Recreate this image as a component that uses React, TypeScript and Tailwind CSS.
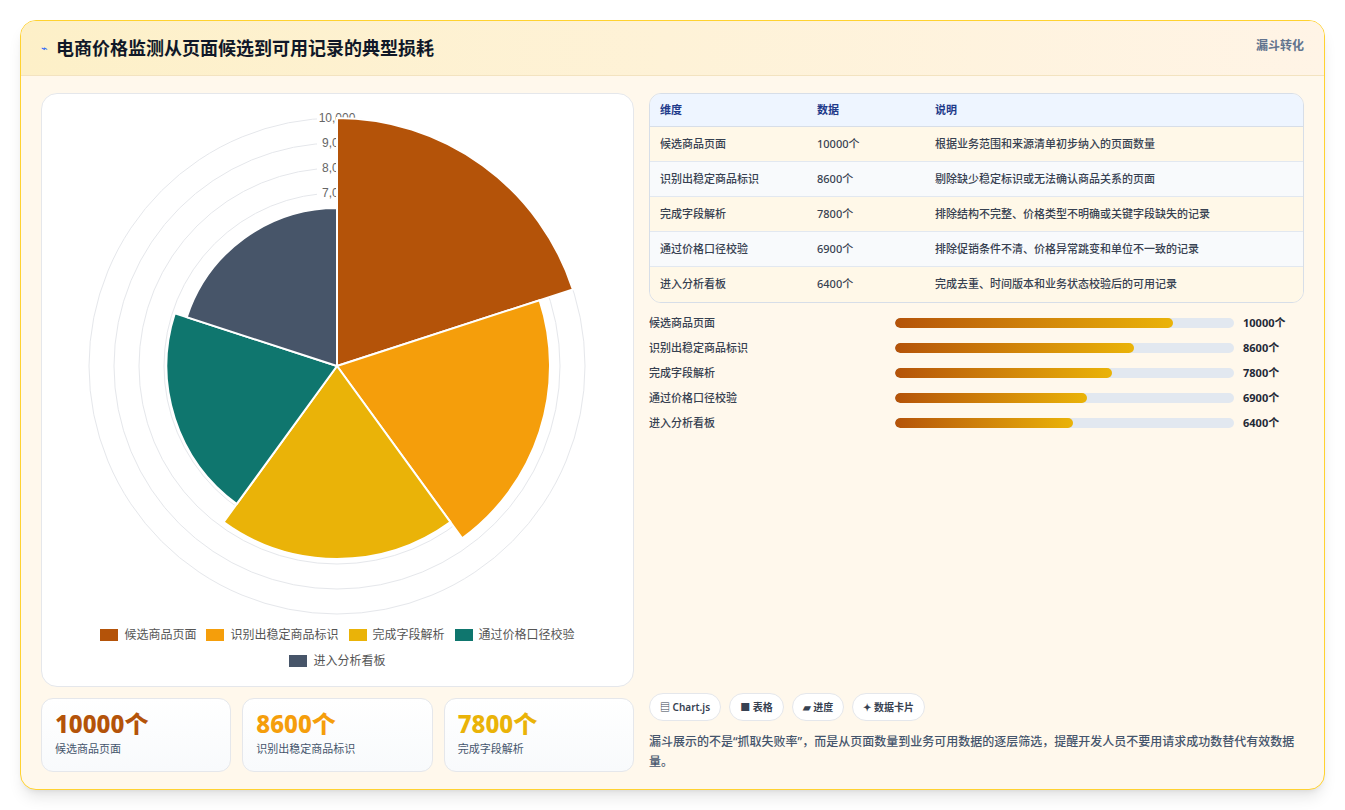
import React from "react";

const data = [
  { name: "候选商品页面", v: 10000, c: "#b45309", desc: "根据业务范围和来源清单初步纳入的页面数量" },
  { name: "识别出稳定商品标识", v: 8600, c: "#f59e0b", desc: "剔除缺少稳定标识或无法确认商品关系的页面" },
  { name: "完成字段解析", v: 7800, c: "#eab308", desc: "排除结构不完整、价格类型不明确或关键字段缺失的记录" },
  { name: "通过价格口径校验", v: 6900, c: "#0f766e", desc: "排除促销条件不清、价格异常跳变和单位不一致的记录" },
  { name: "进入分析看板", v: 6400, c: "#475569", desc: "完成去重、时间版本和业务状态校验后的可用记录" },
];

const font = { fontFamily: '"Noto Sans", "Noto Sans CJK SC", sans-serif' };

function Polar() {
  const cx = 296, cy = 268;
  const r = (v: number) => 0.025 * v - 2;
  const pt = (rad: number, deg: number) => {
    const a = ((deg - 90) * Math.PI) / 180;
    return [cx + rad * Math.cos(a), cy + rad * Math.sin(a)];
  };
  return (
    <svg width="593" height="520" viewBox="0 0 593 520">
      {[10000, 9000, 8000, 7000, 6000, 5000, 4000].map((v) => (
        <circle key={v} cx={cx} cy={cy} r={r(v)} fill="none" stroke="#e5e7eb" strokeWidth="1" />
      ))}
      {[10000, 9000, 8000, 7000].map((v) => (
        <g key={v}>
          <rect x={cx - 20} y={cy - r(v) - 7} width="40" height="13" fill="white" />
          <text x={cx} y={cy - r(v) + 4} textAnchor="middle" fontSize="12" fill="#666" fontFamily="Liberation Sans, sans-serif">
            {v.toLocaleString("en-US")}
          </text>
        </g>
      ))}
      {data.map((d, i) => {
        const rad = r(d.v);
        const [x1, y1] = pt(rad, i * 72);
        const [x2, y2] = pt(rad, (i + 1) * 72);
        return (
          <path key={i} d={`M${cx},${cy} L${x1},${y1} A${rad},${rad} 0 0 1 ${x2},${y2} Z`} fill={d.c} stroke="white" strokeWidth="2" />
        );
      })}
    </svg>
  );
}

export default function App() {
  return (
    <div className="w-[1345px] h-[810px] bg-white pt-5 px-5" style={font}>
      <div className="h-[770px] rounded-2xl border border-amber-300 bg-[#fff8ec] overflow-hidden shadow-lg flex flex-col">
        <div className="h-[55px] shrink-0 flex items-start justify-between px-5 bg-gradient-to-r from-[#fdf0c8] to-[#fff4e6] border-b border-[#f3e3c0]">
          <div className="flex items-center gap-2 h-[55px]">
            <span className="text-[11px] text-blue-600">⌁</span>
            <h1 className="text-[18px] font-bold text-gray-900">电商价格监测从页面候选到可用记录的典型损耗</h1>
          </div>
          <span className="mt-[16px] text-[12px] font-semibold text-slate-500">漏斗转化</span>
        </div>
        <div className="flex-1 flex gap-[15px] px-5 pt-[17px] pb-[18px]">
          <div className="w-[593px] flex flex-col gap-[11px]">
            <div className="h-[594px] rounded-2xl border border-[#e5e7eb] bg-white flex flex-col items-center pt-[4px]">
              <Polar />
              <div className="w-[500px] flex flex-wrap justify-center gap-x-[10px] gap-y-[8px] mt-[8px] text-[12px] text-[#555]">
                {data.map((d) => (
                  <div key={d.name} className="flex items-center gap-[6px]">
                    <span className="w-[18px] h-[12px]" style={{ background: d.c }} />
                    {d.name}
                  </div>
                ))}
              </div>
            </div>
            <div className="grid grid-cols-3 gap-[11px]">
              {data.slice(0, 3).map((d) => (
                <div key={d.name} className="h-[74px] rounded-xl border border-[#e5e7eb] bg-gradient-to-b from-white to-[#f8fafc] px-[13px] pt-[10px]">
                  <div className="text-[24px] font-extrabold leading-[30px]" style={{ color: d.c }}>{d.v}个</div>
                  <div className="text-[11px] text-slate-600 mt-[2px]">{d.name}</div>
                </div>
              ))}
            </div>
          </div>
          <div className="flex-1 flex flex-col">
            <div className="rounded-xl border border-[#d7dee8] overflow-hidden text-[11px]">
              <div className="grid grid-cols-[157px_118px_1fr] h-[33px] items-center px-[10px] bg-[#eef5ff] text-[#1e3a8a] font-semibold border-b border-[#d7dee8]">
                <span>维度</span><span>数据</span><span>说明</span>
              </div>
              {data.map((d, i) => (
                <div key={d.name} className={`grid grid-cols-[157px_118px_1fr] h-[35px] items-center px-[10px] text-[#374151] font-medium ${i % 2 ? "bg-[#f8fafc]" : "bg-[#fff8e8]"} ${i < 4 ? "border-b border-[#e2e8f0]" : ""}`}>
                  <span>{d.name}</span><span>{d.v}个</span><span>{d.desc}</span>
                </div>
              ))}
            </div>
            <div className="flex flex-col gap-[11px] mt-[13px]">
              {data.map((d) => (
                <div key={d.name} className="flex items-center h-[14px] text-[11px] font-medium text-[#374151]">
                  <span className="w-[246px]">{d.name}</span>
                  <div className="w-[339px] h-[10px] rounded-full bg-[#e2e8f0] overflow-hidden">
                    <div className="h-full rounded-full bg-gradient-to-r from-[#b45309] to-[#eab308]" style={{ width: `${(d.v / 10000) * 82}%` }} />
                  </div>
                  <span className="ml-[9px] font-bold text-[#1f2937]">{d.v}个</span>
                </div>
              ))}
            </div>
            <div className="flex-1" />
            <div className="flex gap-[8px] text-[10px] font-semibold text-[#374151]">
              {["▤ Chart.js", "■ 表格", "▰ 进度", "✦ 数据卡片"].map((t) => (
                <span key={t} className="h-[28px] px-[10px] flex items-center rounded-full border border-[#e5e7eb] bg-white">{t}</span>
              ))}
            </div>
            <p className="mt-[11px] text-[12px] leading-[20px] text-slate-600 font-medium">
              漏斗展示的不是“抓取失败率”，而是从页面数量到业务可用数据的逐层筛选，提醒开发人员不要用请求成功数替代有效数据量。
            </p>
          </div>
        </div>
      </div>
    </div>
  );
}
